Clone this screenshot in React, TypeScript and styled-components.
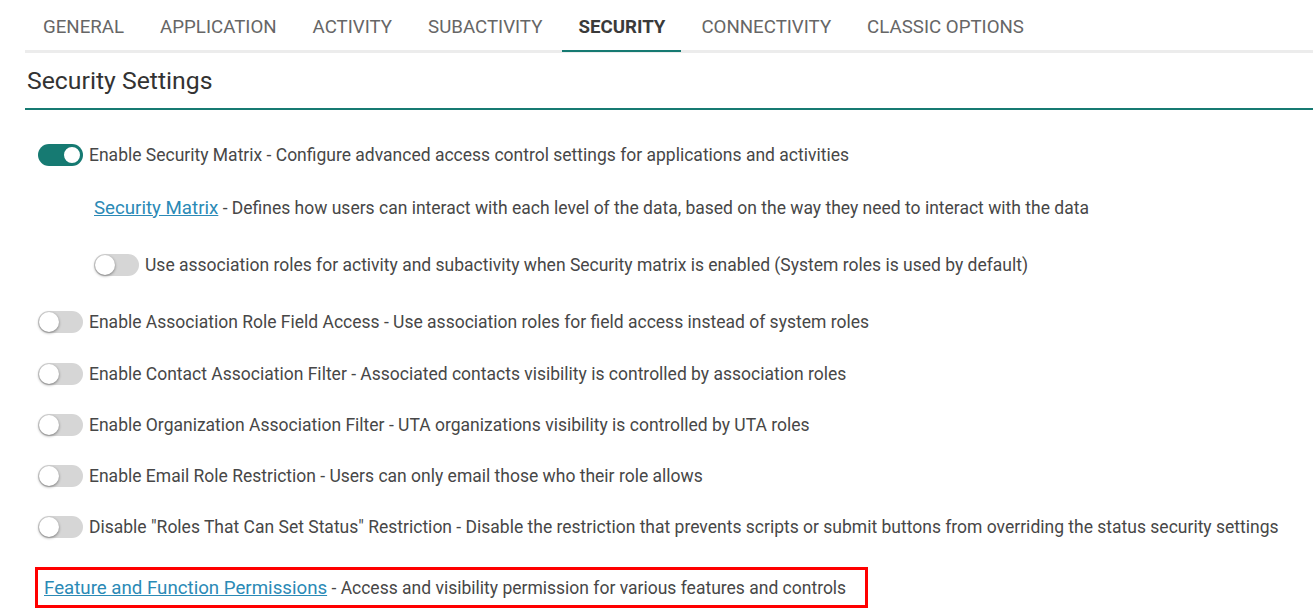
import React, { useState } from 'react';
import styled, { createGlobalStyle } from 'styled-components';

const GlobalStyle = createGlobalStyle`
  body {
    margin: 0;
    background: #ffffff;
    font-family: Roboto, 'Liberation Sans', Arial, sans-serif;
    color: #4a4a4a;
  }
`;

const TEAL = '#167a72';

const Page = styled.div`
  padding-left: 25px;
  overflow: hidden;
  width: 1288px;
`;

const TabBar = styled.nav`
  display: flex;
  gap: 4px;
  padding-left: 2px;
  border-bottom: 3px solid #ececec;
  height: 50px;
  box-sizing: content-box;
  margin-right: -20px;
`;

const Tab = styled.button<{ $active?: boolean }>`
  position: relative;
  background: none;
  border: none;
  padding: 4px 16px 0;
  height: 50px;
  font-family: inherit;
  font-size: 18.7px;
  text-transform: uppercase;
  font-weight: ${({ $active }) => ($active ? 700 : 400)};
  color: ${({ $active }) => ($active ? '#3a3a3a' : '#666666')};
  cursor: pointer;

  &::after {
    content: '';
    display: ${({ $active }) => ($active ? 'block' : 'none')};
    position: absolute;
    left: 0;
    right: 0;
    bottom: -2px;
    height: 2px;
    background: ${TEAL};
  }
`;

const Title = styled.h2`
  margin: 0;
  padding: 14px 0 13px 2px;
  font-size: 24.8px;
  font-weight: 400;
  color: #333333;
  border-bottom: 2px solid ${TEAL};
  margin-right: -40px;
  line-height: 28px;
`;

const Settings = styled.div`
  display: flex;
  flex-direction: column;
  padding-top: 19px;
`;

const Row = styled.div<{ $indent?: number; $gap?: number }>`
  display: flex;
  align-items: center;
  gap: 6px;
  height: 51px;
  margin-top: ${({ $gap }) => $gap ?? 0}px;
  padding-left: ${({ $indent }) => $indent ?? 13}px;
  font-size: 17.5px;
  color: #474747;
  white-space: nowrap;
`;

const Track = styled.span<{ $on: boolean }>`
  position: relative;
  flex: none;
  width: 45px;
  height: 22px;
  border-radius: 11px;
  background: ${({ $on }) => ($on ? TEAL : '#d6d6d6')};
  cursor: pointer;
  transition: background 0.2s;
`;

const Thumb = styled.span<{ $on: boolean }>`
  position: absolute;
  top: 1px;
  left: ${({ $on }) => ($on ? '24px' : '1px')};
  width: 20px;
  height: 20px;
  border-radius: 50%;
  background: #ffffff;
  box-sizing: border-box;
  border: ${({ $on }) => ($on ? `2px solid ${TEAL}` : 'none')};
  box-shadow: ${({ $on }) => ($on ? 'none' : '0 1px 3px rgba(0,0,0,0.45)')};
  transition: left 0.2s;
`;

const Link = styled.a`
  color: #2b8ab6;
  font-size: 18.7px;
  text-decoration: underline;
  cursor: pointer;
`;

const Highlight = styled.div`
  display: inline-flex;
  align-items: center;
  align-self: flex-start;
  margin-left: 10px;
  margin-top: 15px;
  height: 41px;
  padding: 1px 19px 0 6px;
  border: 3px solid #ff0000;
  box-sizing: border-box;
  font-size: 17.5px;
  color: #474747;
  white-space: nowrap;
`;

const Toggle: React.FC<{ initial: boolean }> = ({ initial }) => {
  const [on, setOn] = useState(initial);
  return (
    <Track $on={on} onClick={() => setOn(!on)}>
      <Thumb $on={on} />
    </Track>
  );
};

const tabs = ['General', 'Application', 'Activity', 'Subactivity', 'Security', 'Connectivity', 'Classic Options'];

const toggles = [
  'Enable Association Role Field Access - Use association roles for field access instead of system roles',
  'Enable Contact Association Filter - Associated contacts visibility is controlled by association roles',
  'Enable Organization Association Filter - UTA organizations visibility is controlled by UTA roles',
  'Enable Email Role Restriction - Users can only email those who their role allows',
  'Disable "Roles That Can Set Status" Restriction - Disable the restriction that prevents scripts or submit buttons from overriding the status security settings',
];

export default function App() {
  const [active, setActive] = useState('Security');
  return (
    <>
      <GlobalStyle />
      <Page>
        <TabBar>
          {tabs.map((t) => (
            <Tab key={t} $active={t === active} onClick={() => setActive(t)}>
              {t}
            </Tab>
          ))}
        </TabBar>
        <Title>Security Settings</Title>
        <Settings>
          <Row>
            <Toggle initial={true} />
            Enable Security Matrix - Configure advanced access control settings for applications and activities
          </Row>
          <Row $indent={69} $gap={2}>
            <span>
              <Link>Security Matrix</Link> - Defines how users can interact with each level of the data, based on the way they need to interact with the data
            </span>
          </Row>
          <Row $indent={69} $gap={6}>
            <Toggle initial={false} />
            Use association roles for activity and subactivity when Security matrix is enabled (System roles is used by default)
          </Row>
          {toggles.map((t, i) => (
            <Row key={t} $gap={i === 0 ? 6 : i === 1 ? 1 : 0}>
              <Toggle initial={false} />
              {t}
            </Row>
          ))}
          <Highlight>
            <span>
              <Link>Feature and Function Permissions</Link> - Access and visibility permission for various features and controls
            </span>
          </Highlight>
        </Settings>
      </Page>
    </>
  );
}
